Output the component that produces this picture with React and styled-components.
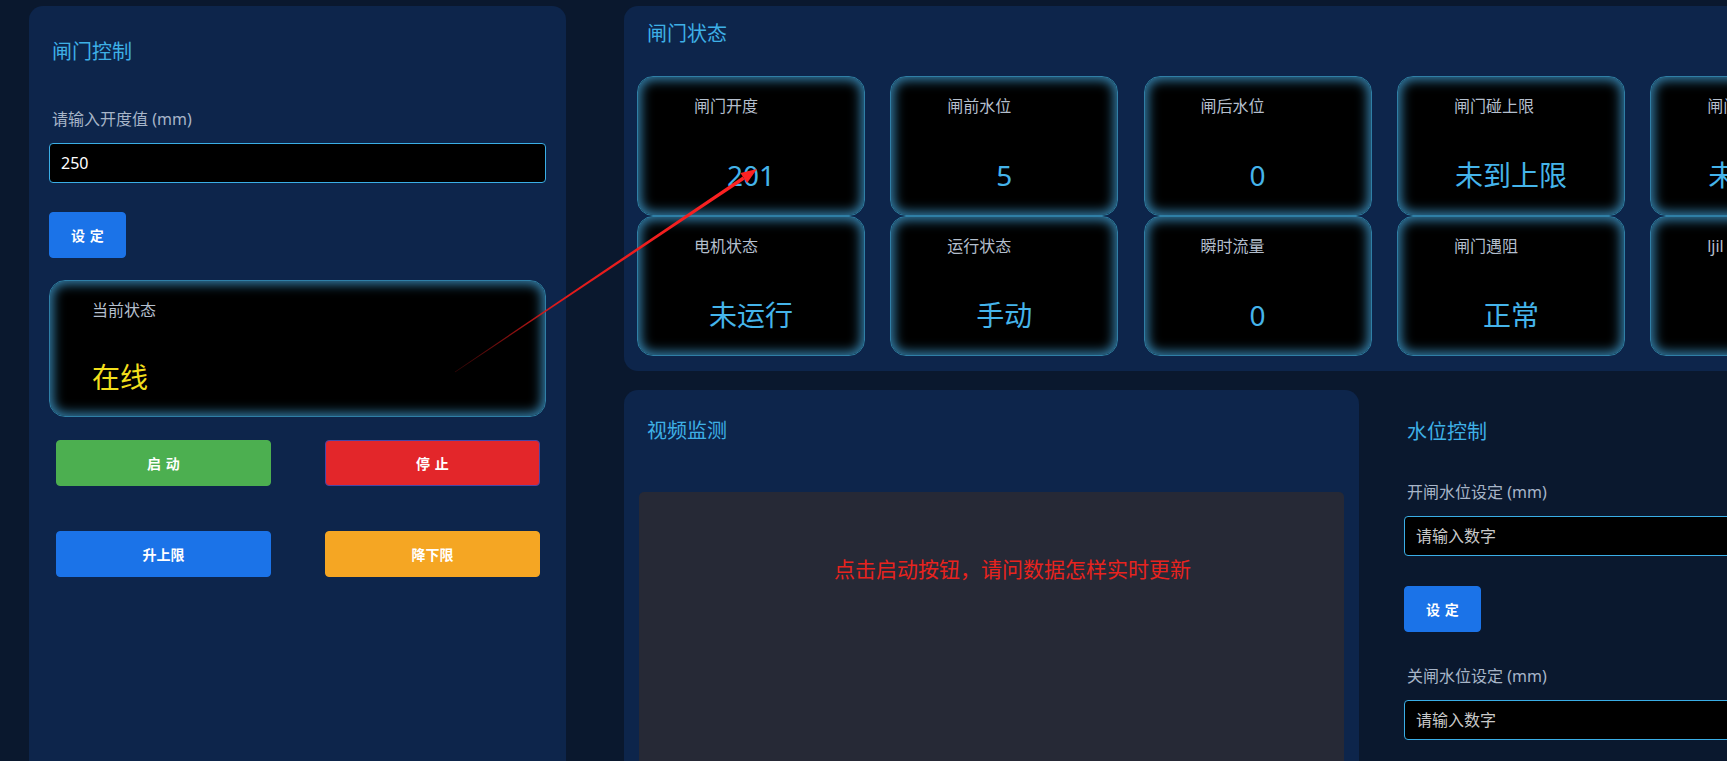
import React from "react";
import styled, { createGlobalStyle, css } from "styled-components";

const GlobalStyle = createGlobalStyle`
  html, body {
    margin: 0;
    padding: 0;
    background: #0a182e;
    overflow: hidden;
  }
  body {
    font-family: "Noto Sans", "Noto Sans CJK SC", sans-serif;
    color: #ffffff;
  }
  * { box-sizing: border-box; }
`;

const Page = styled.div`
  position: relative;
  display: flex;
  align-items: flex-start;
  gap: 58px;
  padding: 6px 0 0 29px;
  width: max-content;
  min-height: 761px;
`;

const Panel = styled.section`
  background: ${(p) => (p.$plain ? "transparent" : "#0d254b")};
  border-radius: 14px;
  flex-shrink: 0;
`;

const LeftPanel = styled(Panel)`
  width: 537px;
  min-height: 820px;
  padding: 32px 20px 0 20px;
`;

const Title = styled.h3`
  margin: 0;
  padding-left: ${(p) => p.$indent ?? 3}px;
  font-size: 20px;
  line-height: 28px;
  font-weight: 400;
  color: #3eb0e6;
`;

const FieldLabel = styled.div`
  margin-top: ${(p) => p.$top}px;
  padding-left: 3px;
  font-size: 16px;
  line-height: 22px;
  color: #a7b5c8;
`;

const NumberInput = styled.input`
  display: block;
  width: 100%;
  height: 40px;
  margin-top: 13px;
  padding: 0 11px;
  background: #000;
  border: 1px solid #3aaee6;
  border-radius: 4px;
  color: #fff;
  font-family: inherit;
  font-size: 16px;
  outline: none;
  &::placeholder {
    color: #c9c9c9;
  }
`;

const palette = {
  blue: "#1b73e8",
  green: "#4caf50",
  red: "#e3262a",
  orange: "#f5a623",
};

const ActionButton = styled.button`
  display: flex;
  align-items: center;
  justify-content: center;
  width: ${(p) => p.$width}px;
  height: 46px;
  margin-top: ${(p) => p.$top ?? 0}px;
  background: ${(p) => palette[p.$tone]};
  border: 1px solid ${(p) => (p.$tone === "red" ? "#4a46a6" : palette[p.$tone])};
  border-radius: 4px;
  color: #fff;
  font-family: inherit;
  font-size: 14px;
  font-weight: 700;
  cursor: pointer;
  ${(p) =>
    p.$spaced &&
    css`
      letter-spacing: 0.34em;
      text-indent: 0.34em;
    `}
`;

const GlowCard = styled.div`
  display: flex;
  flex-direction: column;
  height: ${(p) => p.$height}px;
  padding-top: 18px;
  background: #000;
  border: 1px solid #2f7fa6;
  border-radius: 16px;
  box-shadow: inset 0 0 12px 3px rgba(62, 150, 202, 0.85);
  overflow: hidden;
`;

const CardLabel = styled.div`
  padding-left: ${(p) => p.$indent}px;
  font-size: 16px;
  line-height: 22px;
  color: #b4bfcd;
  white-space: nowrap;
`;

const CardValue = styled.div`
  margin-top: ${(p) => p.$gap}px;
  padding-left: ${(p) => (p.$center ? 0 : p.$indent)}px;
  text-align: ${(p) => (p.$center ? "center" : "left")};
  font-size: 28px;
  line-height: 40px;
  color: ${(p) => p.$color};
  white-space: nowrap;
`;

const StateCard = styled(GlowCard)`
  margin-top: 22px;
`;

const ButtonRow = styled.div`
  display: flex;
  justify-content: space-between;
  padding: 0 6px 0 7px;
  margin-top: ${(p) => p.$top}px;
`;

const RightColumn = styled.div`
  display: flex;
  flex-direction: column;
  gap: 19px;
  flex-shrink: 0;
`;

const StatusPanel = styled(Panel)`
  width: 1267px;
  padding: 14px 13px 15px 13px;
`;

const CardGrid = styled.div`
  display: grid;
  grid-template-columns: repeat(5, 228px);
  grid-auto-rows: 140px;
  column-gap: 25.3px;
  margin-top: 28px;
`;

const BottomRow = styled.div`
  display: flex;
  align-items: flex-start;
  gap: 25px;
`;

const VideoPanel = styled(Panel)`
  width: 735px;
  height: 430px;
  padding: 27px 15px 0 15px;
`;

const VideoArea = styled.div`
  height: 340px;
  margin-top: 47px;
  padding: 63px 0 0 195px;
  background: #262936;
  border-radius: 5px;
`;

const Notice = styled.p`
  margin: 0;
  font-size: 21px;
  line-height: 28px;
  font-weight: 400;
  color: #e8231e;
  white-space: nowrap;
`;

const WaterPanel = styled(Panel)`
  width: 540px;
  padding: 28px 20px 0 20px;
`;

const Overlay = styled.svg`
  position: absolute;
  left: 0;
  top: 0;
  width: 1727px;
  height: 761px;
  pointer-events: none;
  z-index: 5;
`;

const gateCards = [
  { label: "闸门开度", value: "201" },
  { label: "闸前水位", value: "5" },
  { label: "闸后水位", value: "0" },
  { label: "闸门碰上限", value: "未到上限" },
  { label: "闸门碰下限", value: "未到下限" },
  { label: "电机状态", value: "未运行" },
  { label: "运行状态", value: "手动" },
  { label: "瞬时流量", value: "0" },
  { label: "闸门遇阻", value: "正常" },
  { label: "ljil", value: "0" },
];

function PointerArrow() {
  return (
    <Overlay viewBox="0 0 1727 761">
      <defs>
        <linearGradient id="shaft" x1="455" y1="372" x2="744" y2="178" gradientUnits="userSpaceOnUse">
          <stop offset="0" stopColor="#6a0b0b" stopOpacity="0.5" />
          <stop offset="0.35" stopColor="#e01a1a" />
          <stop offset="1" stopColor="#ff2222" />
        </linearGradient>
      </defs>
      <polygon
        points="455.2,372.3 454.8,371.7 742.7,176.4 744.7,179.4"
        fill="url(#shaft)"
      />
      <polygon points="757,169 747.1,182.9 740.4,172.9" fill="#ff2222" />
    </Overlay>
  );
}

export default function App() {
  return (
    <>
      <GlobalStyle />
      <Page>
        <LeftPanel>
          <Title>闸门控制</Title>
          <FieldLabel $top={42}>请输入开度值 (mm)</FieldLabel>
          <NumberInput defaultValue="250" />
          <ActionButton $tone="blue" $width={77} $top={29} $spaced>
            设定
          </ActionButton>
          <StateCard $height={137}>
            <CardLabel $indent={42}>当前状态</CardLabel>
            <CardValue $gap={36} $indent={42} $color="#f2df1c">
              在线
            </CardValue>
          </StateCard>
          <ButtonRow $top={23}>
            <ActionButton $tone="green" $width={215} $spaced>
              启动
            </ActionButton>
            <ActionButton $tone="red" $width={215} $spaced>
              停止
            </ActionButton>
          </ButtonRow>
          <ButtonRow $top={45}>
            <ActionButton $tone="blue" $width={215}>
              升上限
            </ActionButton>
            <ActionButton $tone="orange" $width={215}>
              降下限
            </ActionButton>
          </ButtonRow>
        </LeftPanel>

        <RightColumn>
          <StatusPanel>
            <Title $indent={10}>闸门状态</Title>
            <CardGrid>
              {gateCards.map((c) => (
                <GlowCard key={c.label} $height={140}>
                  <CardLabel $indent={56}>{c.label}</CardLabel>
                  <CardValue $gap={38} $center $color="#45b4ea">
                    {c.value}
                  </CardValue>
                </GlowCard>
              ))}
            </CardGrid>
          </StatusPanel>

          <BottomRow>
            <VideoPanel>
              <Title $indent={8}>视频监测</Title>
              <VideoArea>
                <Notice>点击启动按钮，请问数据怎样实时更新</Notice>
              </VideoArea>
            </VideoPanel>

            <WaterPanel $plain>
              <Title>水位控制</Title>
              <FieldLabel $top={35}>开闸水位设定 (mm)</FieldLabel>
              <NumberInput placeholder="请输入数字" />
              <ActionButton $tone="blue" $width={77} $top={30} $spaced>
                设定
              </ActionButton>
              <FieldLabel $top={33}>关闸水位设定 (mm)</FieldLabel>
              <NumberInput placeholder="请输入数字" />
            </WaterPanel>
          </BottomRow>
        </RightColumn>

        <PointerArrow />
      </Page>
    </>
  );
}
